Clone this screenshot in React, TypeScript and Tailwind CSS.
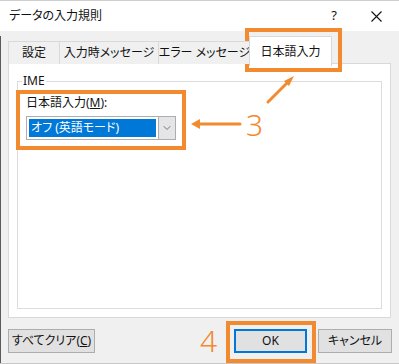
import { ChevronDown } from "lucide-react";

const jp = "font-['Noto_Sans','Noto_Sans_CJK_JP',sans-serif] [font-feature-settings:'palt']";

function Tab({ label, w }: { label: string; w: string }) {
  return (
    <div
      className={`${w} mt-[5px] h-[23px] border border-b-0 border-[#d9d9d9] bg-[#f0f0f0] -ml-px first:ml-0 flex items-center justify-center whitespace-nowrap text-[12px] text-[#111]`}
    >
      {label}
    </div>
  );
}

function Button({ children, w, primary }: { children: React.ReactNode; w: string; primary?: boolean }) {
  return (
    <div
      className={`${w} h-[24px] flex items-center justify-center whitespace-nowrap text-[12px] text-[#111] bg-[#e1e1e1] ${
        primary ? "border-2 border-[#0078d7]" : "border border-[#adadad]"
      }`}
    >
      {children}
    </div>
  );
}

export default function App() {
  return (
    <div className={`${jp} relative w-[399px] h-[364px] overflow-hidden bg-[#f0f0f0] border-b border-[#c8c8c8]`}>
      {/* title bar */}
      <div className="h-[31px] bg-white flex items-center pl-[9px] pr-[17px] border-t border-[#cfcfcf]">
        <span className="text-[12px] text-[#111] flex-1">データの入力規則</span>
        <span className="text-[13px] text-[#111] mr-[34px]">?</span>
        <svg width="11" height="11" viewBox="0 0 11 11" className="text-[#111]">
          <path d="M0.5 0.5 L10.5 10.5 M10.5 0.5 L0.5 10.5" stroke="currentColor" strokeWidth="1.1" />
        </svg>
      </div>

      <div className="border-l border-[#5a5a5a] h-[333px] pl-[7px] pr-[7px]">
        {/* tabs */}
        <div className="flex h-[28px] mt-[5px] relative z-10">
          <Tab label="設定" w="w-[52px]" />
          <Tab label="入力時メッセージ" w="w-[100px]" />
          <Tab label="エラー メッセージ" w="w-[93px]" />
          <div className="w-[83px] h-[30px] -ml-[2px] border border-b-0 border-[#d9d9d9] bg-white flex items-center justify-center whitespace-nowrap text-[12px] text-[#111]">
            日本語入力
          </div>
        </div>

        {/* panel */}
        <div className="-mt-px h-[255px] w-[383px] bg-white border border-[#d9d9d9] pt-[17px] px-[8px]">
          <div className="relative h-[228px] border border-[#dcdcdc] pt-[13px] pl-[8px]">
            <span className="absolute -top-[9px] left-[4px] bg-white px-[1px] text-[12px] leading-[16px] text-[#111]">
              IME
            </span>
            <div className="text-[12px] leading-[16px] text-[#111]">
              日本語入力(<span className="underline">M</span>):
            </div>
            <div className="mt-[5px] w-[150px] h-[24px] border border-[#abadb3] bg-white flex items-stretch">
              <div className="flex-1 m-[2px] bg-[#0078d7] text-white text-[12px] flex items-center pl-[2px] whitespace-nowrap">
                オフ (英語モード)
              </div>
              <div className="w-[17px] bg-[#e5e5e5] border-l border-[#adadad] flex items-center justify-center">
                <ChevronDown size={12} strokeWidth={1.5} className="text-[#505050]" />
              </div>
            </div>
          </div>
        </div>

        {/* buttons */}
        <div className="flex mt-[11px] items-center">
          <Button w="w-[87px]">
            すべてクリア(<span className="underline">C</span>)
          </Button>
          <div className="flex-1" />
          <Button w="w-[73px]" primary>
            OK
          </Button>
          <div className="w-[11px]" />
          <Button w="w-[74px]">キャンセル</Button>
        </div>
      </div>

      {/* annotations */}
      <div className="absolute left-[245px] top-[28px] w-[97px] h-[44px] border-4 border-[#f28a30]" />
      <div className="absolute left-[16px] top-[90px] w-[170px] h-[60px] border-4 border-[#f28a30]" />
      <div className="absolute left-[226px] top-[321px] w-[90px] h-[42px] border-4 border-[#f28a30]" />
      <svg className="absolute left-0 top-0" width="399" height="364" viewBox="0 0 399 364">
        <g stroke="#f28a30" strokeWidth="3" fill="#f28a30" strokeLinecap="round">
          <line x1="240" y1="124" x2="198" y2="124" />
          <path d="M191 124 L200 119 L200 129 Z" stroke="none" />
          <line x1="268" y1="102" x2="288" y2="82" />
          <path d="M294 76 L284 81 L289 86 Z" stroke="none" />
        </g>
      </svg>
      <div className="absolute left-[246px] top-[108px] text-[30px] leading-[34px] font-light text-[#f28a30]">3</div>
      <div className="absolute left-[200px] top-[324px] text-[30px] leading-[34px] font-light text-[#f28a30]">4</div>
    </div>
  );
}
